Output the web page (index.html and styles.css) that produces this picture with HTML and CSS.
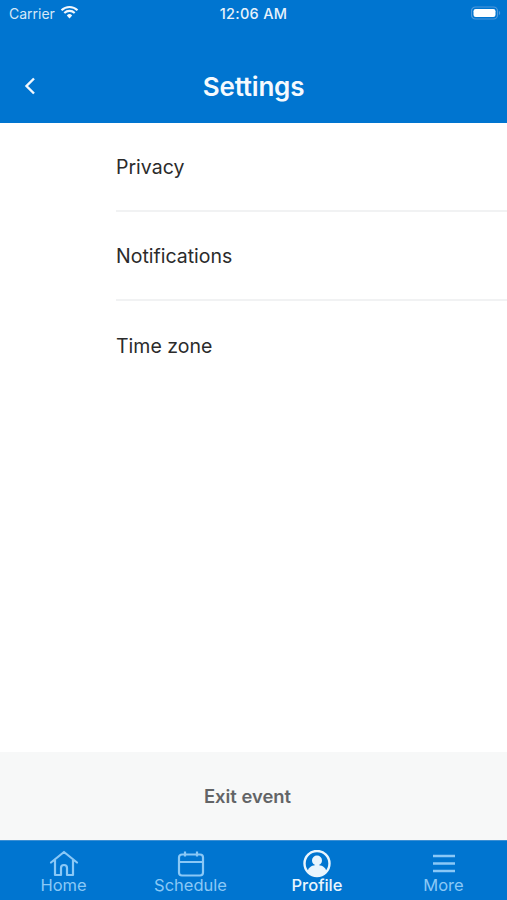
FILE: index.html
```html
<!DOCTYPE html>
<html lang="en">
<head>
<meta charset="utf-8">
<title>Settings</title>
<link rel="stylesheet" href="styles.css">
</head>
<body>
<div class="app">
  <header class="header">
    <div class="status">
      <div class="status-left">
        <span>Carrier</span>
        <svg class="wifi" width="19" height="14" viewBox="0 0 19 14"><path d="M1.500 5.200a11.500 11.500 0 0 1 16 0M4.300 8a7.500 7.500 0 0 1 10.400 0" fill="none" stroke="currentColor" stroke-width="2.100"/><path d="M6.800 10.400a3.800 3.800 0 0 1 5.400 0L9.500 13.400z" fill="currentColor"/></svg>
      </div>
      <span class="status-time">12:06 AM</span>
      <svg class="battery" width="30" height="14" viewBox="0 0 30 14"><rect x="0.500" y="1" width="26" height="12" rx="4" fill="none" stroke="#4f98da" stroke-width="1.200"/><rect x="2.500" y="3" width="22" height="8" rx="2.200" fill="#fff"/><path d="M28 5v4a2 2 0 0 0 1.200-2A2 2 0 0 0 28 5z" fill="#4f98da"/></svg>
    </div>
    <div class="nav">
      <svg class="back" width="12" height="18" viewBox="0 0 12 18"><path d="M10 1.500 2.500 9l7.500 7.500" fill="none" stroke="#f2f8fd" stroke-width="2.400"/></svg>
      <h1 class="title">Settings</h1>
    </div>
  </header>
  <main class="list">
    <div class="row">Privacy</div>
    <div class="row">Notifications</div>
    <div class="row">Time zone</div>
  </main>
  <div class="exit">Exit event</div>
  <nav class="tabs">
    <div class="tab">
      <svg width="30" height="28" viewBox="0 0 30 28"><path d="M2 12.500 15 2l13 10.500M6 10v15h6v-7a3 3 0 0 1 6 0v7h6V10" fill="none" stroke="currentColor" stroke-width="2.200" stroke-linejoin="round" stroke-linecap="round"/></svg>
      <span>Home</span>
    </div>
    <div class="tab">
      <svg width="30" height="28" viewBox="0 0 30 28"><rect x="3" y="4.500" width="24" height="21" rx="3" fill="none" stroke="currentColor" stroke-width="2.200"/><path d="M3 12h24M9 1.500v5M21 1.500v5" fill="none" stroke="currentColor" stroke-width="2.200"/></svg>
      <span>Schedule</span>
    </div>
    <div class="tab active">
      <svg width="30" height="28" viewBox="0 0 30 28"><circle cx="15" cy="13.500" r="12.500" fill="none" stroke="currentColor" stroke-width="2.400"/><circle cx="15" cy="10.500" r="5" fill="currentColor"/><path d="M5.500 21.500c1-4.500 5-6.500 9.500-6.500s8.500 2 9.500 6.500a12.500 12.500 0 0 1-19 0z" fill="currentColor"/></svg>
      <span>Profile</span>
    </div>
    <div class="tab">
      <svg width="30" height="28" viewBox="0 0 30 28"><path d="M4 6h22M4 13.500h22M4 21h22" fill="none" stroke="currentColor" stroke-width="2.400"/></svg>
      <span>More</span>
    </div>
  </nav>
</div>
</body>
</html>
```

FILE: styles.css
```css
* { box-sizing: border-box; }
html, body { margin: 0; padding: 0; }
body { font-family: Inter, "Liberation Sans", sans-serif; background: #fff; }
.app { width: 507px; height: 900px; display: flex; flex-direction: column; overflow: hidden; }
.header { height: 123px; flex: none; background: #0075d0; color: #fff; display: flex; flex-direction: column; }
.status { height: 28px; display: flex; align-items: center; justify-content: space-between; padding: 0 6px 2px 9px; font-size: 14px; position: relative; }
.status-left { display: flex; align-items: center; gap: 5px; color: #d6e8f7; }
.wifi { color: #f2f8fd; margin-top: -3px; }
.status-time { position: absolute; left: 0; right: 0; text-align: center; color: #e8f2fb; font-size: 14.500px; font-weight: 500; letter-spacing: 0.3px; }
.nav { flex: 1; display: flex; align-items: center; justify-content: center; position: relative; padding-top: 21px; }
.back { position: absolute; left: 24px; top: 49px; }
.title { margin: 0; font-size: 26px; font-weight: 600; color: #f5fafe; letter-spacing: -0.2px; }
.list { flex: 1; padding-left: 116px; }
.row { height: 89px; display: flex; align-items: center; border-bottom: 2px solid #f1f2f3; font-size: 19.500px; color: #2b2b2b; }
.row:last-child { border-bottom: none; }
.exit { height: 88px; flex: none; background: #f7f8f8; display: flex; align-items: center; justify-content: center; font-size: 18.400px; font-weight: 600; color: #626466; padding-right: 12px; }
.tabs { height: 60px; flex: none; background: #0075d0; border-top: 1px solid #3b8fd4; display: grid; grid-template-columns: 127px 127px 126px 127px; }
.tab { display: flex; flex-direction: column; align-items: center; color: #8ac8f6; font-size: 16.500px; line-height: 20px; padding-top: 9px; }
.tab svg { display: block; margin-bottom: -3px; }
.tab.active { color: #eaf5fd; font-weight: 500; }
```
